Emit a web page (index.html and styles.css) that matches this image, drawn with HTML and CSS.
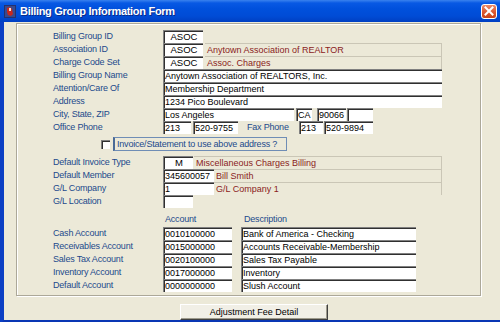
FILE: index.html
```html
<!DOCTYPE html>
<html lang="en">
<head>
  <meta charset="UTF-8">
  <meta name="viewport" content="width=device-width, initial-scale=1.0">
  <title>Billing Group Information Form</title>
  <link rel="stylesheet" href="styles.css">
</head>
<body>
  <div class="window">
    <div class="titlebar">
      <svg class="app-icon" width="12" height="13" viewBox="0 0 12 13">
        <rect x="0" y="0" width="12" height="13" fill="#24316e"/>
        <rect x="1" y="1" width="10" height="11" fill="#3a4a8c"/>
        <path d="M3 3 L6 2 L8 4 L9 9 L7 11 L4 10 L3 7 Z" fill="#c8281e"/>
        <path d="M5 3 L7 3 L7 6 L5 6 Z" fill="#f2e6d6"/>
      </svg>
      <span class="title">Billing Group Information Form</span>
      <button class="close" aria-label="Close">
        <svg width="10" height="10" viewBox="0 0 10 10"><path d="M1.5 1.5 L8.5 8.5 M8.5 1.5 L1.5 8.5" stroke="#fff" stroke-width="2" stroke-linecap="square"/></svg>
      </button>
    </div>

    <div class="client">
      <div class="panel">
        <div class="row"><span class="lbl">Billing Group ID</span><span class="fld w-id center">ASOC</span></div>
        <div class="row"><span class="lbl">Association ID</span><span class="fld w-id center">ASOC</span><span class="desc w-desc">Anytown Association of REALTOR</span></div>
        <div class="row"><span class="lbl">Charge Code Set</span><span class="fld w-id center">ASOC</span><span class="desc w-desc">Assoc. Charges</span></div>
        <div class="row"><span class="lbl">Billing Group Name</span><span class="fld w-full">Anytown Association of REALTORS, Inc.</span></div>
        <div class="row"><span class="lbl">Attention/Care Of</span><span class="fld w-full">Membership Department</span></div>
        <div class="row"><span class="lbl">Address</span><span class="fld w-full">1234 Pico Boulevard</span></div>
        <div class="row">
          <span class="lbl">City, State, ZIP</span>
          <span class="fld w-city">Los Angeles</span>
          <span class="fld w-state">CA</span>
          <span class="fld w-zip">90066</span>
          <span class="fld w-zip4"></span>
        </div>
        <div class="row">
          <span class="lbl">Office Phone</span>
          <span class="fld w-area">213</span>
          <span class="fld w-phone">520-9755</span>
          <span class="lbl fax">Fax Phone</span>
          <span class="fld w-fax-area">213</span>
          <span class="fld w-fax">520-9894</span>
        </div>
        <div class="row check-row">
          <span class="checkbox"></span>
          <span class="check-label">Invoice/Statement to use above address ?</span>
        </div>
        <div class="row gap-top"><span class="lbl">Default Invoice Type</span><span class="fld w-short center">M</span><span class="desc w-desc-m">Miscellaneous Charges Billing</span></div>
        <div class="row"><span class="lbl">Default Member</span><span class="fld w-member">345600057</span><span class="desc w-desc2">Bill Smith</span></div>
        <div class="row"><span class="lbl">G/L Company</span><span class="fld w-member">1</span><span class="desc w-desc2">G/L Company 1</span></div>
        <div class="row"><span class="lbl">G/L Location</span><span class="fld w-short"></span></div>

        <div class="row head-row">
          <span class="lbl"></span>
          <span class="col-head acct-head">Account</span>
          <span class="col-head">Description</span>
        </div>
        <div class="row"><span class="lbl">Cash Account</span><span class="fld w-acct">0010100000</span><span class="fld w-acct-desc">Bank of America - Checking</span></div>
        <div class="row"><span class="lbl">Receivables Account</span><span class="fld w-acct">0015000000</span><span class="fld w-acct-desc">Accounts Receivable-Membership</span></div>
        <div class="row"><span class="lbl">Sales Tax Account</span><span class="fld w-acct">0020100000</span><span class="fld w-acct-desc">Sales Tax Payable</span></div>
        <div class="row"><span class="lbl">Inventory Account</span><span class="fld w-acct">0017000000</span><span class="fld w-acct-desc">Inventory</span></div>
        <div class="row"><span class="lbl">Default Account</span><span class="fld w-acct">0000000000</span><span class="fld w-acct-desc">Slush Account</span></div>
      </div>

      <div class="btnbar">
        <button class="cmd">Adjustment Fee Detail</button>
      </div>
    </div>
  </div>
</body>
</html>
```

FILE: styles.css
```css
html, body { margin: 0; padding: 0; }
body { width: 500px; height: 322px; overflow: hidden; background: #ece9d8; font-family: "Liberation Sans", Arial, sans-serif; }

.window { width: 500px; height: 322px; display: flex; flex-direction: column; }

/* title bar */
.titlebar { height: 22px; flex: none; display: flex; align-items: center; padding-left: 4px; box-sizing: border-box;
  background: linear-gradient(#3a82ee 0, #0859e4 3px, #0050dc 9px, #004cd6 16px, #003fc2 22px); }
.app-icon { flex: none; margin-top: 1px; }
.title { margin-left: 4px; color: #fff; font-size: 11px; font-weight: bold; letter-spacing: -0.3px; text-shadow: 1px 1px 0 #0a2a8a; }
.close { margin-left: auto; margin-right: 3px; width: 16px; height: 15px; padding: 0; border: 1px solid #fff; border-radius: 3px;
  background: linear-gradient(#ec8a68, #d9532c 60%, #c84318); display: flex; align-items: center; justify-content: center; }

/* client area */
.client { flex: 1; border-left: 4px solid #0b3fc4; border-bottom: 4px solid #0936b4; background: #ece9d8; }
.panel { margin: 1px 0 0 12px; width: 465px; height: 273px; box-sizing: border-box; padding: 6px 0 0 36px;
  border: 1px solid #aca899; box-shadow: inset 1px 1px 0 #fff, 1px 1px 0 #fff; }

.row { display: flex; align-items: stretch; height: 13px; font-size: 9px; }
.lbl { width: 110px; flex: none; line-height: 13px; color: #234a8c; letter-spacing: -0.2px; white-space: nowrap; }

.fld { flex: none; box-sizing: border-box; height: 13px; background: #fff; color: #000; padding-left: 1px;
  border-top: 1px solid #808080; border-left: 1px solid #808080; box-shadow: inset 1px 1px 0 #303030;
  line-height: 12px; white-space: nowrap; overflow: hidden; }
.center { text-align: center; font-size: 9.5px; }
.desc { flex: none; box-sizing: border-box; height: 13px; color: #8a1c1c; padding-left: 2px; line-height: 12px;
  border-top: 1px solid #cac6b6; border-right: 1px solid #cac6b6; white-space: nowrap; }

.w-id { width: 40px; }
.w-short { width: 30px; }
.w-desc { width: 237px; margin-left: 2px; }
.w-desc-m { width: 248px; margin-left: 1px; }
.w-desc2 { width: 228px; }
.w-full { width: 279px; }
.w-city { width: 131px; }
.w-state { width: 16px; margin-left: 2px; }
.w-zip { width: 29px; margin-left: 5px; }
.w-zip4 { width: 26px; margin-left: 1px; }
.w-area { width: 28px; }
.w-phone { width: 45px; margin-left: 2px; }
.fax { width: 52px; margin-left: 9px; }
.w-fax-area { width: 24px; }
.w-fax { width: 49px; margin-left: 1px; }
.w-member { width: 51px; }
.w-acct { width: 69px; }
.w-acct-desc { width: 175px; margin-left: 9px; }

.check-row { height: 14px; margin-top: 3px; }
.checkbox { width: 9px; height: 9px; margin: 3px 0 0 48px; background: #fff; box-sizing: border-box;
  border-top: 1px solid #808080; border-left: 1px solid #808080; box-shadow: inset 1px 1px 0 #303030; }
.check-label { width: 174px; margin-left: 3px; box-sizing: border-box; border: 1px solid #6f8db5;
  border-left: 2px solid #4a6a96; color: #234a8c; line-height: 12px; padding-left: 2px; letter-spacing: -0.2px; white-space: nowrap; }
.gap-top { margin-top: 5px; }

.head-row { height: 19px; align-items: flex-end; }
.head-row .lbl { line-height: 16px; }
.col-head { color: #234a8c; line-height: 16px; letter-spacing: -0.2px; }
.acct-head { width: 79px; padding-left: 2px; }

/* button */
.btnbar { padding: 5px 0 0 176px; }
.cmd { width: 148px; height: 16px; padding: 0; font-family: "Liberation Sans", Arial, sans-serif; font-size: 9px; color: #000;
  background: #f1efe6; border: 1px solid; border-color: #fff #404040 #404040 #fff; box-shadow: inset -1px -1px 0 #9d9a8c; }
```
